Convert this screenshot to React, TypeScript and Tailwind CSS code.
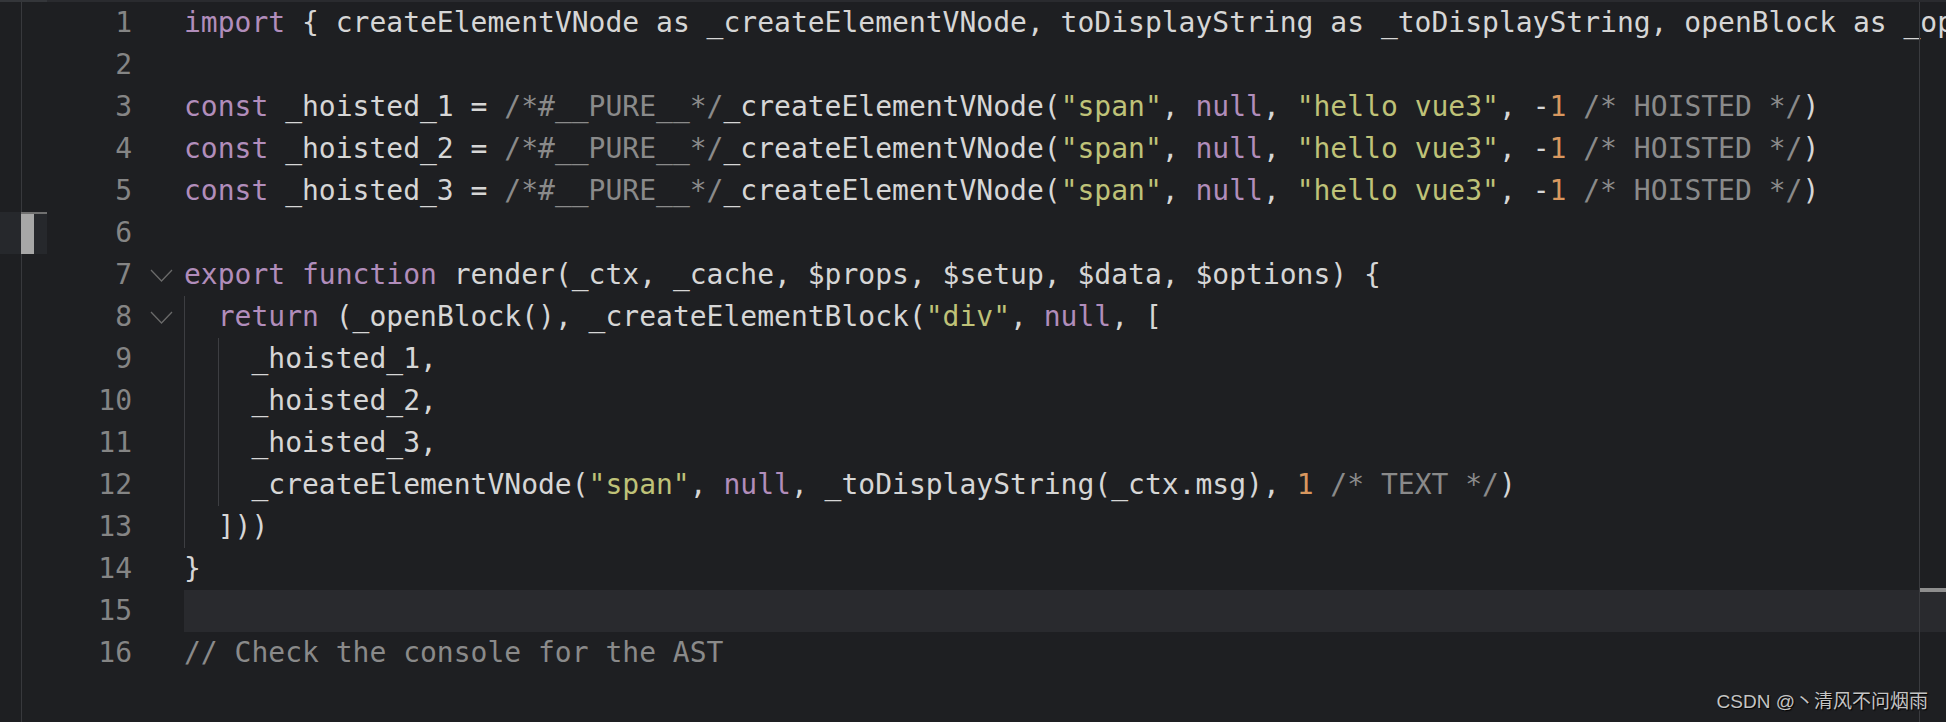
import React from "react";

type Seg = [string, string];

// colores do tema
const K = "text-[#b18dbb]"; // keyword
const S = "text-[#bfc278]"; // string
const N = "text-[#d8975f]"; // number
const C = "text-[#8a8a8a]"; // comment
const P = "text-[#d6d6d6]"; // plain

const lines: Seg[][] = [
    [["import", K], [" { createElementVNode as _createElementVNode, toDisplayString as _toDisplayString, openBlock as _op", P]],
    [],
    [["const", K], [" _hoisted_1 = ", P], ["/*#__PURE__*/", C], ["_createElementVNode(", P], ['"span"', S], [", ", P], ["null", K], [", ", P], ['"hello vue3"', S], [", -", P], ["1", N], [" ", P], ["/* HOISTED */", C], [")", P]],
    [["const", K], [" _hoisted_2 = ", P], ["/*#__PURE__*/", C], ["_createElementVNode(", P], ['"span"', S], [", ", P], ["null", K], [", ", P], ['"hello vue3"', S], [", -", P], ["1", N], [" ", P], ["/* HOISTED */", C], [")", P]],
    [["const", K], [" _hoisted_3 = ", P], ["/*#__PURE__*/", C], ["_createElementVNode(", P], ['"span"', S], [", ", P], ["null", K], [", ", P], ['"hello vue3"', S], [", -", P], ["1", N], [" ", P], ["/* HOISTED */", C], [")", P]],
    [],
    [["export", K], [" ", P], ["function", K], [" render(_ctx, _cache, $props, $setup, $data, $options) {", P]],
    [["  ", P], ["return", K], [" (_openBlock(), _createElementBlock(", P], ['"div"', S], [", ", P], ["null", K], [", [", P]],
    [["    _hoisted_1,", P]],
    [["    _hoisted_2,", P]],
    [["    _hoisted_3,", P]],
    [["    _createElementVNode(", P], ['"span"', S], [", ", P], ["null", K], [", _toDisplayString(_ctx.msg), ", P], ["1", N], [" ", P], ["/* TEXT */", C], [")", P]],
    [["  ]))", P]],
    [["}", P]],
    [],
    [["// Check the console for the AST", C]],
];

// guias de indentação por linha (em colunas)
const guides: Record<number, number[]> = {
    8: [0], 9: [0, 2], 10: [0, 2], 11: [0, 2], 12: [0, 2], 13: [0],
};

const Chevron = () => (
    <svg width="23" height="13" viewBox="0 0 23 13" fill="none" stroke="#6a6a6a" strokeWidth="1.3">
        <polyline points="1,1 11.5,12 22,1" />
    </svg>
);

export default function App() {
    const mono = { fontFamily: '"DejaVu Sans Mono", "Liberation Mono", monospace' };

    return (
        <div className="relative w-[1946px] h-[722px] overflow-hidden bg-[#1e1f22] flex flex-col" style={mono}>
            {/* borda superior */}
            <div className="h-[2px] bg-[#2a2b2f] flex">
                <div className="w-[47px] bg-[#34363a]" />
            </div>

            <div className="flex-1 flex text-[28px] leading-[42px]">
                {/* faixa esquerda */}
                <div className="w-[47px] flex flex-col">
                    {lines.map((_, i) =>
                        i === 5 ? (
                            <div key={i} className="h-[42px] flex bg-[#26282c]">
                                <div className="w-[21px]" />
                                <div className="flex-1 flex flex-col">
                                    <div className="h-[2px] bg-[#707070]" />
                                    <div className="flex-1 w-[13px] bg-[#a7a7a7]" />
                                </div>
                            </div>
                        ) : (
                            <div key={i} className="h-[42px] flex">
                                <div className="w-[21px]" />
                                <div className="w-px bg-[#38393d]" />
                            </div>
                        )
                    )}
                    <div className="flex-1 flex">
                        <div className="w-[21px]" />
                        <div className="w-px bg-[#38393d]" />
                    </div>
                </div>

                {/* números de linha */}
                <div className="w-[85px] flex flex-col text-right text-[#858585]">
                    {lines.map((_, i) => (
                        <div key={i} className="h-[42px]">{i + 1}</div>
                    ))}
                </div>

                {/* dobras */}
                <div className="w-[52px] flex flex-col">
                    {lines.map((_, i) => (
                        <div key={i} className="h-[42px] flex items-center pl-[18px]">
                            {(i === 6 || i === 7) && <Chevron />}
                        </div>
                    ))}
                </div>

                {/* código */}
                <div className="flex-1 flex flex-col overflow-hidden">
                    {lines.map((segs, i) => (
                        <div key={i} className={`relative h-[42px] whitespace-pre ${i === 14 ? "bg-[#292a2e]" : ""}`}>
                            {(guides[i + 1] || []).map((col) => (
                                <div
                                    key={col}
                                    className={`absolute top-0 bottom-0 w-px bg-[#3d3e42] ${col === 0 ? "left-0" : "left-[34px]"}`}
                                />
                            ))}
                            {segs.map(([t, c], j) => (
                                <span key={j} className={c}>{t}</span>
                            ))}
                        </div>
                    ))}
                </div>
            </div>

            {/* barra de rolagem sobreposta */}
            <div className="absolute top-[2px] right-0 bottom-0 w-[27px] border-l border-[#3a3b3f]">
                <div className="absolute top-[586px] left-0 right-0 h-[4px] bg-[#8e8e8e]" />
            </div>

            {/* marca d'água */}
            <div
                className="absolute right-[18px] bottom-[9px] text-[19px] leading-[22px] text-[#c4c4c4]"
                style={{ fontFamily: '"Liberation Sans", "Noto Sans CJK SC", sans-serif', textShadow: "1px 1px 1px #000" }}
            >
                CSDN @丶清风不问烟雨
            </div>
        </div>
    );
}
